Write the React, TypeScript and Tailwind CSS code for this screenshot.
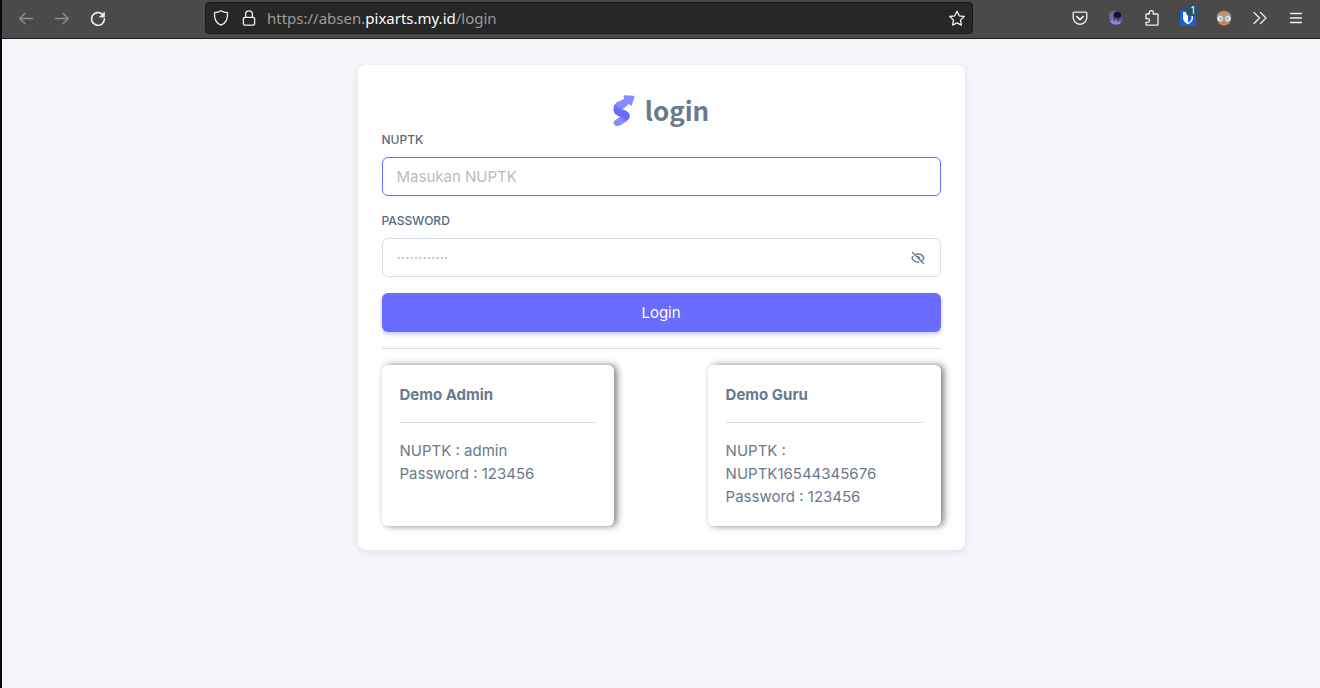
import { useState } from "react";
import type { ReactNode } from "react";
import { BiHide, BiShow } from "react-icons/bi";

const demoAccounts = [
  { title: "Demo Admin", nuptk: "admin", password: "123456" },
  { title: "Demo Guru", nuptk: "NUPTK16544345676", password: "123456" },
];

function ToolButton({ label, dim, children }: { label: string; dim?: boolean; children: ReactNode }) {
  return (
    <button
      type="button"
      aria-label={label}
      disabled={dim}
      className={`flex size-5 items-center justify-center ${dim ? "text-[#8e8e8e]" : "text-[#f0f0f0]"}`}
    >
      {children}
    </button>
  );
}

function Stroke({ children }: { children: ReactNode }) {
  return (
    <svg width="16" height="16" viewBox="0 0 16 16" fill="none" stroke="currentColor" strokeWidth="1.3" strokeLinecap="round" strokeLinejoin="round">
      {children}
    </svg>
  );
}

function BrowserBar() {
  return (
    <header className="flex h-[39px] items-center border-b border-[#1c1b1f] bg-[#4a4a4a] px-3.5 pb-0.5 font-['Noto_Sans',sans-serif]">
      <div className="flex gap-4">
        <ToolButton label="Back" dim>
          <Stroke><path d="M14.5 8.5H1.7M7 3.2L1.7 8.5 7 13.8" /></Stroke>
        </ToolButton>
        <ToolButton label="Forward" dim>
          <Stroke><path d="M1.5 8.5h12.8M9 3.2l5.3 5.3L9 13.8" /></Stroke>
        </ToolButton>
        <ToolButton label="Reload">
          <Stroke>
            <path d="M12.6 4.5A6.4 6.4 0 1 0 14.4 8.9" strokeWidth="1.6" />
            <path d="M14.4 2.5v4.6H9.8z" fill="currentColor" strokeWidth="0.8" />
          </Stroke>
        </ToolButton>
      </div>

      <div className="ml-[97px] flex h-8 max-w-3xl flex-1 items-center rounded border border-[#1b1b1b] bg-[#272727] px-[5px]">
        <ToolButton label="Tracking protection">
          <Stroke><path d="M8 .8c2 1.3 4.2 1.8 6.5 1.9.4 5.4-1.2 10.4-6.5 12.5C2.7 13.1 1.1 8.1 1.5 2.7 3.8 2.6 6 2.1 8 .8z" /></Stroke>
        </ToolButton>
        <span className="ml-2 flex">
          <ToolButton label="Site information">
            <Stroke>
              <rect x="2.4" y="7.3" width="11.2" height="7.9" rx="1.5" />
              <path d="M4.6 7.3V4.2a3.4 3.4 0 0 1 6.8 0v3.1" />
            </Stroke>
          </ToolButton>
        </span>
        <p className="ml-2 flex-1 text-[15px] text-[#9c9c9c]">
          https://absen.<span className="text-[#fbfbfe]">pixarts.my.id</span>/login
        </p>
        <ToolButton label="Bookmark">
          <Stroke><path d="M8 1.2l2.2 4.6 5 .7-3.7 3.6.9 5L8 12.8l-4.4 2.3.9-5L.8 6.5l5-.7z" /></Stroke>
        </ToolButton>
      </div>

      <div className="ml-auto flex gap-4">
        <ToolButton label="Pocket">
          <Stroke>
            <path d="M2.4 2.2h11.2c.7 0 1.2.5 1.2 1.2v4.1a6.8 6.8 0 0 1-13.6 0V3.4c0-.7.5-1.2 1.2-1.2z" />
            <path d="M4.8 6.5L8 9.6l3.2-3.1" strokeWidth="1.6" />
          </Stroke>
        </ToolButton>
        <ToolButton label="Dark theme">
          <svg width="16" height="16" viewBox="0 0 16 16">
            <circle cx="8" cy="8" r="8" fill="#45436f" />
            <path d="M1 5a8 8 0 0 1 6-5L5 5l1 4-4 3z" fill="#6e6b9a" />
            <path d="M2 12l3-3 1 3 2-3 2 3 3-2 1 2a8 8 0 0 1-12 0z" fill="#8d8cc6" />
            <ellipse cx="9.5" cy="5" rx="3.5" ry="3" fill="#121126" />
            <path d="M11 10l3-3 1 3-2 3z" fill="#5a5890" />
          </svg>
        </ToolButton>
        <ToolButton label="Extensions">
          <Stroke>
            <path d="M2 8.7V4.8c0-.5.3-.8.8-.8h2.5V2.6a2 2 0 0 1 4 0V4h3.9c.5 0 .8.3.8.8v9.6c0 .5-.3.8-.8.8H2.8c-.5 0-.8-.3-.8-.8v-2.1h1.7a1.8 1.8 0 0 0 0-3.6z" />
          </Stroke>
        </ToolButton>
        <ToolButton label="Bitwarden">
          <span className="relative">
            <svg width="16" height="16" viewBox="0 0 16 16">
              <rect width="16" height="16" rx="2" fill="#175ddc" />
              <path d="M3 2h10v6c0 3-2.3 4.9-5 6.3C5.3 12.9 3 11 3 8z" fill="#fff" />
              <path d="M8 3.500h3.500V8c0 2-1.500 3.500-3.500 4.600z" fill="#175ddc" />
            </svg>
            <span className="absolute -top-[5px] left-1.5 h-[11px] w-3.5 rounded-sm bg-[#2b5263] text-center text-[10px] leading-[11px] text-white">1</span>
          </span>
        </ToolButton>
        <ToolButton label="Profile">
          <svg width="16" height="16" viewBox="0 0 16 16">
            <circle cx="8" cy="8.5" r="7" fill="#d98a63" />
            <path d="M.8 7C1 3 4 .8 8 .8S15 3 15.2 7L12 5H4z" fill="#b89468" />
            <circle cx="4.2" cy="8.5" r="3" fill="#e6f3f4" stroke="#8fb5bd" />
            <circle cx="11.8" cy="8.5" r="3" fill="#e6f3f4" stroke="#8fb5bd" />
            <circle cx="4.5" cy="8.5" r="1" fill="#487883" />
            <circle cx="11.5" cy="8.5" r="1" fill="#487883" />
            <path d="M6.5 13h3" stroke="#b0603f" />
          </svg>
        </ToolButton>
        <ToolButton label="More tools">
          <Stroke><path d="M2 2.5L7.5 8 2 13.5M8.5 2.5L14 8l-5.5 5.5" /></Stroke>
        </ToolButton>
        <ToolButton label="Menu">
          <Stroke><path d="M2.5 3.5h11M2.5 8h11M2.5 12.5h11" /></Stroke>
        </ToolButton>
      </div>
    </header>
  );
}

function Logo() {
  return (
    <svg width="22" height="31" viewBox="23 22 65 92" aria-hidden="true">
      <path
        d="M57 23L83 24Q88 25 86 30L79 52Q77 56 74 52L70 49L52 64L44 70L28 68Q22 54 33 44L57 33L54 28Q53 23 57 23z"
        fill="#8789ff"
      />
      <path d="M46 85L30 96C22 102 23 112 34 114C42 114 52 108 64 99L62 88z" fill="#8789ff" />
      <path
        d="M29 50C34 60 46 62 58 67C71 72 76 81 71 91C69 95 65 98 61 101C60 93 48 88 36 83C23 77 21 62 29 50z"
        fill="#696cff"
      />
    </svg>
  );
}

export default function App() {
  const [hidden, setHidden] = useState(true);

  return (
    <div className="min-h-screen border-l-2 border-[#08080c] bg-[#f4f4f9] font-['Inter',sans-serif] text-[15px] leading-[23px] text-[#697a8d]">
      <BrowserBar />
      <main className="flex justify-center pt-[26px] pb-6">
        <section className="w-full max-w-[607px] rounded-lg bg-white p-6 shadow-[0_2px_6px_rgba(67,89,113,0.12)]">
          <h1 className="flex items-center justify-center gap-2.5 font-['Noto_Sans_CJK_JP',sans-serif] text-[26px] leading-[42px] font-bold">
            <Logo />
            login
          </h1>

          <form onSubmit={(e) => e.preventDefault()}>
            <label htmlFor="nuptk" className="mb-2 block text-xs leading-[18px] font-medium text-[#566a7f]">NUPTK</label>
            <input
              id="nuptk"
              type="text"
              placeholder="Masukan NUPTK"
              className="mb-4 block h-[39px] w-full rounded-md border border-[#696cff] px-3.5 shadow-[0_0_4px_rgba(105,108,255,0.1)] outline-none placeholder:text-[#b4bdc6]"
            />

            <label htmlFor="password" className="mb-2 block text-xs leading-[18px] font-medium text-[#566a7f]">PASSWORD</label>
            <div className="mb-4 flex h-[39px] items-center rounded-md border border-[#d9dee3] px-3.5">
              <input
                id="password"
                type={hidden ? "password" : "text"}
                placeholder="············"
                className="min-w-0 flex-1 outline-none placeholder:text-[#b4bdc6]"
              />
              <button type="button" aria-label="Show password" onClick={() => setHidden(!hidden)}>
                {hidden ? <BiHide size={16} /> : <BiShow size={16} />}
              </button>
            </div>

            <button type="submit" className="block h-[39px] w-full rounded-md bg-[#696cff] text-white shadow-[0_2px_4px_rgba(105,108,255,0.4)]">
              Login
            </button>
          </form>

          <hr className="my-4 border-[#d9dee3]" />

          <div className="flex justify-between">
            {demoAccounts.map(({ title, nuptk, password }) => (
              <article key={title} className="w-5/12 rounded-md bg-white p-[18px] shadow-[3px_0_7px_rgba(0,0,0,0.5)]">
                <h2 className="font-bold">{title}</h2>
                <hr className="my-4 border-[#d9dee3]" />
                <p>
                  NUPTK : {nuptk}
                  <br />
                  Password : {password}
                </p>
              </article>
            ))}
          </div>
        </section>
      </main>
    </div>
  );
}
